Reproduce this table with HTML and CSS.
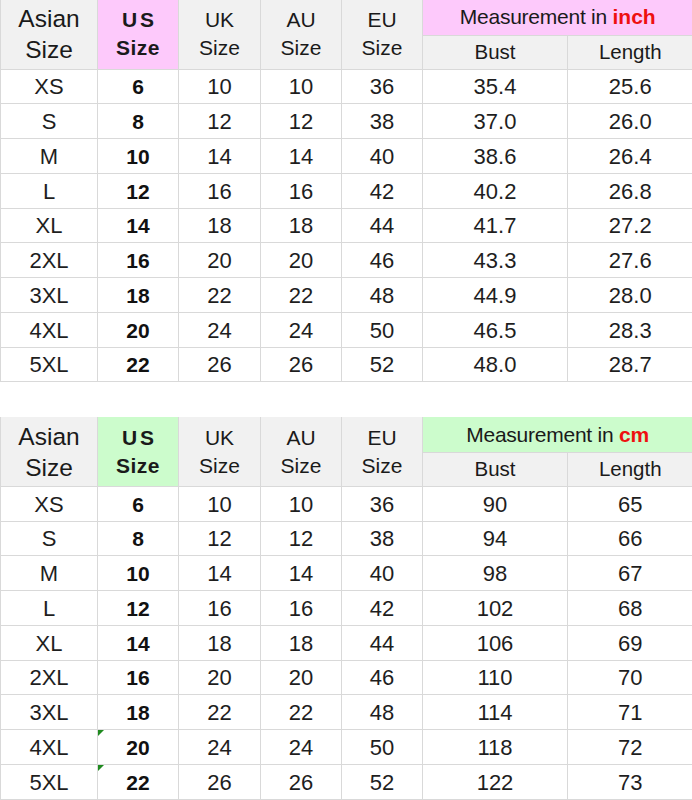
FILE: index.html
```html
<!DOCTYPE html>
<html>
<head>
<meta charset="utf-8">
<link rel="stylesheet" href="styles.css">
</head>
<body>
<table class="chart">
  <colgroup>
    <col class="c1"><col class="c2"><col class="c3"><col class="c4"><col class="c5"><col class="c6"><col class="c7">
  </colgroup>
  <tr class="h1">
    <th rowspan="2" class="asian">Asian<br>Size</th>
    <th rowspan="2" class="us pink"><span class="usl">US</span><br>Size</th>
    <th rowspan="2">UK<br>Size</th>
    <th rowspan="2">AU<br>Size</th>
    <th rowspan="2">EU<br>Size</th>
    <th colspan="2" class="meas pink">Measurement in <b class="red">inch</b></th>
  </tr>
  <tr class="h2"><th class="sub">Bust</th><th class="sub">Length</th></tr>
  <tr class="row"><td>XS</td><td class="b">6</td><td>10</td><td>10</td><td>36</td><td>35.4</td><td>25.6</td></tr>
  <tr class="row"><td>S</td><td class="b">8</td><td>12</td><td>12</td><td>38</td><td>37.0</td><td>26.0</td></tr>
  <tr class="row"><td>M</td><td class="b">10</td><td>14</td><td>14</td><td>40</td><td>38.6</td><td>26.4</td></tr>
  <tr class="row"><td>L</td><td class="b">12</td><td>16</td><td>16</td><td>42</td><td>40.2</td><td>26.8</td></tr>
  <tr class="row"><td>XL</td><td class="b">14</td><td>18</td><td>18</td><td>44</td><td>41.7</td><td>27.2</td></tr>
  <tr class="row"><td>2XL</td><td class="b">16</td><td>20</td><td>20</td><td>46</td><td>43.3</td><td>27.6</td></tr>
  <tr class="row"><td>3XL</td><td class="b">18</td><td>22</td><td>22</td><td>48</td><td>44.9</td><td>28.0</td></tr>
  <tr class="row"><td>4XL</td><td class="b">20</td><td>24</td><td>24</td><td>50</td><td>46.5</td><td>28.3</td></tr>
  <tr class="row"><td>5XL</td><td class="b">22</td><td>26</td><td>26</td><td>52</td><td>48.0</td><td>28.7</td></tr>
</table>

<table class="chart second">
  <colgroup>
    <col class="c1"><col class="c2"><col class="c3"><col class="c4"><col class="c5"><col class="c6"><col class="c7">
  </colgroup>
  <tr class="h1">
    <th rowspan="2" class="asian">Asian<br>Size</th>
    <th rowspan="2" class="us green"><span class="usl">US</span><br>Size</th>
    <th rowspan="2">UK<br>Size</th>
    <th rowspan="2">AU<br>Size</th>
    <th rowspan="2">EU<br>Size</th>
    <th colspan="2" class="meas green">Measurement in <b class="red">cm</b></th>
  </tr>
  <tr class="h2"><th class="sub">Bust</th><th class="sub">Length</th></tr>
  <tr class="row"><td>XS</td><td class="b">6</td><td>10</td><td>10</td><td>36</td><td>90</td><td>65</td></tr>
  <tr class="row"><td>S</td><td class="b">8</td><td>12</td><td>12</td><td>38</td><td>94</td><td>66</td></tr>
  <tr class="row"><td>M</td><td class="b">10</td><td>14</td><td>14</td><td>40</td><td>98</td><td>67</td></tr>
  <tr class="row"><td>L</td><td class="b">12</td><td>16</td><td>16</td><td>42</td><td>102</td><td>68</td></tr>
  <tr class="row"><td>XL</td><td class="b">14</td><td>18</td><td>18</td><td>44</td><td>106</td><td>69</td></tr>
  <tr class="row"><td>2XL</td><td class="b">16</td><td>20</td><td>20</td><td>46</td><td>110</td><td>70</td></tr>
  <tr class="row"><td>3XL</td><td class="b">18</td><td>22</td><td>22</td><td>48</td><td>114</td><td>71</td></tr>
  <tr class="row"><td>4XL</td><td class="b flag">20</td><td>24</td><td>24</td><td>50</td><td>118</td><td>72</td></tr>
  <tr class="row"><td>5XL</td><td class="b flag">22</td><td>26</td><td>26</td><td>52</td><td>122</td><td>73</td></tr>
</table>
</body>
</html>
```

FILE: styles.css
```css
html, body {
  margin: 0;
  padding: 0;
  background: #ffffff;
}

body {
  font-family: "Liberation Sans", Arial, sans-serif;
  color: #1a1a1a;
}

.chart {
  width: 692px;
  border-collapse: collapse;
  table-layout: fixed;
  margin: 0;
}

.chart.second {
  margin-top: 35px;
}

.c1 { width: 97px; }
.c2 { width: 81px; }
.c3 { width: 82px; }
.c4 { width: 81px; }
.c5 { width: 81px; }
.c6 { width: 145px; }
.c7 { width: 125px; }

.chart th,
.chart td {
  border: 1px solid #d9d9d9;
  text-align: center;
  vertical-align: middle;
  padding: 0;
}

.chart tr:first-child th {
  border-top: none;
}

.chart th:last-child,
.chart td:last-child {
  border-right: none;
}

.chart th {
  background: #f1f1f1;
  font-weight: normal;
  font-size: 21px;
  line-height: 28px;
  color: #1a1a1a;
}

.chart th.asian {
  font-size: 24.5px;
  line-height: 31px;
}

.chart .h1 { height: 35px; }
.chart .h2 { height: 34px; }
.chart .row { height: 34.75px; }

.chart th.us {
  font-weight: bold;
  font-size: 21px;
  letter-spacing: 0.5px;
}

.chart th.us .usl {
  letter-spacing: 3px;
  margin-right: -3px;
}

.chart th.meas {
  font-size: 21px;
  letter-spacing: -0.25px;
  line-height: 24px;
}

.chart th.sub {
  font-size: 20.5px;
}

.pink { background: #fdc9fb !important; }
.green { background: #ccfccc !important; }

.red {
  color: #ee1010;
  font-weight: bold;
  letter-spacing: 0;
}

.chart td {
  font-size: 22px;
  line-height: 26px;
  padding-top: 2px;
  color: #1e1e1e;
}

.chart td.b {
  font-weight: bold;
  font-size: 21px;
  color: #111111;
}

.chart td.flag {
  position: relative;
}

.chart td.flag::before {
  content: "";
  position: absolute;
  left: 0;
  top: 0;
  width: 0;
  height: 0;
  border-top: 6px solid #1f8a1f;
  border-right: 6px solid transparent;
}
```
